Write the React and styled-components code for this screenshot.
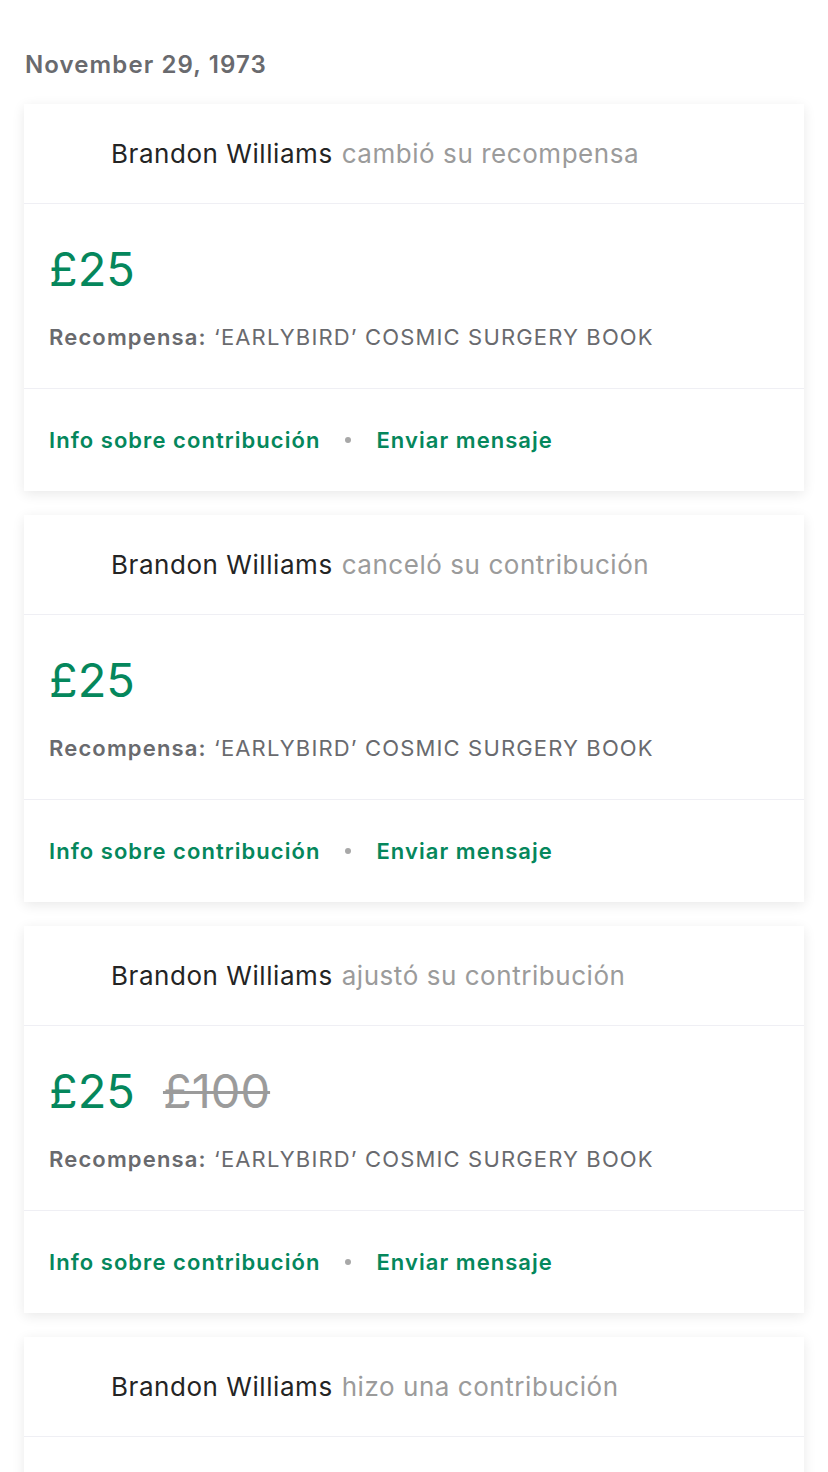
import React from "react";
import styled, { createGlobalStyle } from "styled-components";

const GlobalStyle = createGlobalStyle`
  html, body {
    margin: 0;
    padding: 0;
    background: #ffffff;
  }
  body {
    font-family: Inter, "Noto Sans", "Liberation Sans", sans-serif;
    -webkit-font-smoothing: antialiased;
  }
`;

const Page = styled.div`
  width: 828px;
  padding: 50px 24px 0 24px;
  box-sizing: border-box;
`;

const DateLabel = styled.div`
  font-size: 24px;
  line-height: 29px;
  font-weight: 600;
  letter-spacing: 1.1px;
  color: #696a6e;
  padding-left: 1px;
  margin-bottom: 25px;
`;

const Feed = styled.div`
  display: flex;
  flex-direction: column;
  gap: 24px;
`;

const Card = styled.div`
  background: #ffffff;
  box-shadow: 0 3px 12px rgba(0, 0, 0, 0.09);
  display: flex;
  flex-direction: column;
`;

const CardHeader = styled.div`
  height: 99px;
  display: flex;
  align-items: center;
  padding-left: 87px;
  border-bottom: 1px solid #efeff4;
  font-size: 26px;
  letter-spacing: 0.55px;
  color: #9b9b9b;
  white-space: nowrap;
`;

const Name = styled.span`
  color: #242424;
  margin-right: 9px;
`;

const CardBody = styled.div`
  height: 185px;
  box-sizing: border-box;
  padding: 36px 25px 0 25px;
  border-bottom: 1px solid #efeff4;
`;

const Amounts = styled.div`
  display: flex;
  align-items: baseline;
  gap: 28px;
  font-size: 47px;
  line-height: 58px;
`;

const Amount = styled.span`
  color: ${(props) => (props.old ? "#9b9b9b" : "#05875c")};
  text-decoration: ${(props) => (props.old ? "line-through" : "none")};
  text-decoration-thickness: 3px;
`;

const Reward = styled.div`
  margin-top: 26px;
  font-size: 22px;
  line-height: 26px;
  letter-spacing: 1.15px;
  color: #696a6e;
  white-space: nowrap;
`;

const RewardLabel = styled.span`
  font-weight: 600;
`;

const CardFooter = styled.div`
  height: 102px;
  display: flex;
  align-items: center;
  padding-left: 25px;
  font-size: 22px;
  font-weight: 600;
  letter-spacing: 1.05px;
`;

const Link = styled.a`
  color: #05875c;
  text-decoration: none;
  cursor: pointer;
`;

const Dot = styled.span`
  width: 6px;
  height: 6px;
  border-radius: 50%;
  background: #a8a8a8;
  margin: 0 25px;
`;

const activities = [
  { action: "cambió su recompensa", amount: "£25" },
  { action: "canceló su contribución", amount: "£25" },
  { action: "ajustó su contribución", amount: "£25", old: "£100" },
  { action: "hizo una contribución", amount: "£25" },
];

const ActivityCard = ({ action, amount, old }) => {
  return (
    <Card>
      <CardHeader>
        <Name>Brandon Williams</Name>
        {action}
      </CardHeader>
      <CardBody>
        <Amounts>
          <Amount>{amount}</Amount>
          {old && <Amount old>{old}</Amount>}
        </Amounts>
        <Reward>
          <RewardLabel>Recompensa:</RewardLabel> ‘EARLYBIRD’ COSMIC SURGERY BOOK
        </Reward>
      </CardBody>
      <CardFooter>
        <Link>Info sobre contribución</Link>
        <Dot />
        <Link>Enviar mensaje</Link>
      </CardFooter>
    </Card>
  );
};

const App = () => {
  return (
    <>
      <GlobalStyle />
      <Page>
        <DateLabel>November 29, 1973</DateLabel>
        <Feed>
          {activities.map((data, idx) => (
            <ActivityCard key={idx} {...data} />
          ))}
        </Feed>
      </Page>
    </>
  );
};

export default App;
